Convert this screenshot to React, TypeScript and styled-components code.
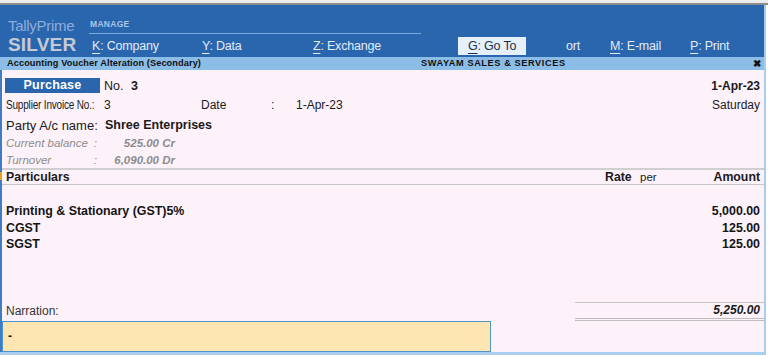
import React from "react";
import styled, { createGlobalStyle } from "styled-components";

const Global = createGlobalStyle`
  html, body { margin: 0; padding: 0; background: #ffffff; }
  body { font-family: "Liberation Sans", Arial, sans-serif; color: #1a1a1a; }
`;

const Screen = styled.div`
  width: 768px;
  height: 359px;
  display: flex;
  flex-direction: column;
  overflow: hidden;
  background: #ffffff;
`;

const TopStrip = styled.div`
  height: 3px;
  background: #ececec;
  border-bottom: 2px solid #8c8c8c;
`;

const Window = styled.div`
  width: 764px;
  border-right: 2px solid #a9cdee;
  display: flex;
  flex-direction: column;
  height: 350px;
`;

const Header = styled.div`
  height: 52px;
  background: #2966ae;
  display: flex;
`;

const Brand = styled.div`
  width: 81px;
  padding-left: 8px;
  display: flex;
  flex-direction: column;
  justify-content: flex-end;
  padding-bottom: 2px;
`;

const BrandTop = styled.div`
  font-size: 15px;
  color: #8eaedb;
  line-height: 17px;
  letter-spacing: -0.3px;
`;

const BrandBottom = styled.div`
  font-size: 19px;
  font-weight: bold;
  color: #c4cad4;
  line-height: 21px;
  letter-spacing: 0.2px;
`;

const MenuArea = styled.div`
  flex: 1;
  display: flex;
  flex-direction: column;
`;

const GroupRow = styled.div`
  height: 29px;
  display: flex;
  align-items: flex-end;
`;

const GroupLabel = styled.div`
  width: 331px;
  height: 15px;
  border-bottom: 1px solid #7fa8dc;
  font-size: 8.5px;
  font-weight: bold;
  color: #a9c4e8;
  padding-left: 1px;
  letter-spacing: 0.3px;
  line-height: 12px;
`;

const MenuRow = styled.div`
  height: 23px;
  display: flex;
  align-items: center;
`;

const MenuItem = styled.div<{ $w: number; $active?: boolean }>`
  width: ${(p) => p.$w}px;
  flex: none;
  font-size: 12.5px;
  height: 18px;
  line-height: 18px;
  box-sizing: border-box;
  color: ${(p) => (p.$active ? "#1f2f4a" : "#e3ebf6")};
  background: ${(p) => (p.$active ? "#e6f0fa" : "transparent")};
  padding-left: ${(p) => (p.$active ? 10 : 3)}px;
  white-space: nowrap;
  letter-spacing: -0.2px;
`;

const Key = styled.span`
  text-decoration: underline;
  text-underline-offset: 3px;
`;

const Spacer = styled.div<{ $w: number }>`
  width: ${(p) => p.$w}px;
  flex: none;
`;

const SubBar = styled.div`
  height: 13px;
  background: #8bbde7;
  display: grid;
  grid-template-columns: 1fr 1fr 20px;
  align-items: center;
  font-size: 9.2px;
  font-weight: bold;
  color: #111;
  line-height: 13px;
`;

const SubLeft = styled.div`
  padding-left: 7px;
  letter-spacing: 0.1px;
  white-space: nowrap;
`;

const SubCenter = styled.div`
  padding-left: 49px;
  letter-spacing: 0.6px;
  white-space: nowrap;
`;

const Close = styled.div`
  text-align: center;
  font-size: 10px;
  padding-left: 6px;
`;

const Body = styled.div`
  flex: 1;
  background: #fdf2fa;
  border-left: 2px solid #3f7cc4;
  display: flex;
  flex-direction: column;
  position: relative;
`;

const Row = styled.div<{ $h: number; $top?: number }>`
  height: ${(p) => p.$h}px;
  margin-top: ${(p) => p.$top ?? 0}px;
  display: flex;
  align-items: center;
  justify-content: space-between;
  padding: 0 4px 0 4px;
  font-size: 12px;
`;

const Cluster = styled.div`
  display: flex;
  align-items: center;
`;

const TypeBox = styled.div`
  width: 95px;
  height: 15px;
  background: #2966ae;
  color: #ffffff;
  font-weight: bold;
  font-size: 12.5px;
  text-align: center;
  line-height: 15px;
  margin-left: -1px;
  letter-spacing: 0.2px;
`;

const NoLabel = styled.span`
  margin-left: 4px;
  font-size: 12.5px;
`;

const Bold = styled.span<{ $ml?: number }>`
  font-weight: bold;
  margin-left: ${(p) => p.$ml ?? 0}px;
`;

const NarrowBox = styled.span<{ $w: number }>`
  display: inline-block;
  width: ${(p) => p.$w}px;
  white-space: nowrap;
`;

const NarrowText = styled.span`
  display: inline-block;
  font-size: 12px;
  transform: scaleX(0.83);
  transform-origin: left center;
  letter-spacing: -0.2px;
`;

const Cell = styled.span<{ $w: number }>`
  display: inline-block;
  width: ${(p) => p.$w}px;
  white-space: nowrap;
`;

const PartyLabel = styled.span`
  font-size: 13px;
  width: 99px;
  display: inline-block;
`;

const PartyName = styled.span`
  font-size: 12.5px;
  font-weight: bold;
`;

const InfoRow = styled.div<{ $h: number }>`
  height: ${(p) => p.$h}px;
  display: flex;
  align-items: center;
  padding-left: 4px;
  font-size: 11.5px;
  font-style: italic;
  color: #8c8c8c;
  white-space: nowrap;
`;

const InfoLabel = styled.span`
  width: 91px;
  display: flex;
  justify-content: space-between;
  padding-right: 2px;
`;

const InfoValue = styled.span`
  width: 76px;
  display: inline-block;
  text-align: right;
  font-weight: bold;
`;

const Separator = styled.div`
  height: 2px;
  background: #cfcfcf;
`;

const ColHeader = styled.div`
  height: 14px;
  display: flex;
  align-items: center;
  padding: 0 4px;
  font-size: 12.3px;
  font-weight: bold;
  border-bottom: 1px solid #c8c8c8;
`;

const Grow = styled.div`
  flex: 1;
`;

const RateCol = styled.span`
  width: 35px;
`;

const PerCol = styled.span`
  width: 40px;
  font-weight: normal;
  font-size: 11.5px;
`;

const AmountCol = styled.span`
  width: 80px;
  text-align: right;
`;

const ItemList = styled.div`
  margin-top: 18px;
  display: flex;
  flex-direction: column;
`;

const Item = styled.div`
  height: 16.5px;
  display: flex;
  align-items: center;
  justify-content: space-between;
  padding: 0 4px;
  font-size: 12.4px;
  font-weight: bold;
  color: #141414;
`;

const FootRow = styled.div`
  margin-top: auto;
  display: flex;
  align-items: flex-end;
  justify-content: space-between;
`;

const NarrLabel = styled.div`
  padding-left: 4px;
  font-size: 12px;
  color: #333;
  line-height: 15px;
  padding-bottom: 2px;
`;

const TotalBox = styled.div`
  width: 185px;
  border-top: 1px solid #c4c4c4;
  border-bottom: 3px double #bdbdbd;
  height: 15px;
  text-align: right;
  font-size: 12px;
  font-weight: bold;
  font-style: italic;
  line-height: 15px;
  padding-right: 4px;
  box-sizing: content-box;
`;

const NarrationInput = styled.div`
  width: 482px;
  height: 29px;
  background: #fee6b3;
  border: 1px solid #4e93c9;
  font-size: 12px;
  font-weight: bold;
  line-height: 28px;
  padding-left: 5px;
  box-sizing: content-box;
`;

const BottomBar = styled.div`
  height: 3px;
  background: #a9cdee;
`;

const Marker = styled.div`
  position: absolute;
  left: -2px;
  top: 102px;
  width: 2px;
  height: 8px;
  background: #e8a020;
`;

export default function App() {
  return (
    <Screen>
      <Global />
      <TopStrip />
      <Window>
        <Header>
          <Brand>
            <BrandTop>TallyPrime</BrandTop>
            <BrandBottom>SILVER</BrandBottom>
          </Brand>
          <MenuArea>
            <GroupRow>
              <GroupLabel>MANAGE</GroupLabel>
            </GroupRow>
            <MenuRow>
              <MenuItem $w={110}>
                <Key>K</Key>: Company
              </MenuItem>
              <MenuItem $w={111}>
                <Key>Y</Key>: Data
              </MenuItem>
              <MenuItem $w={148}>
                <Key>Z</Key>: Exchange
              </MenuItem>
              <MenuItem $w={68} $active>
                <Key>G</Key>: Go To
              </MenuItem>
              <Spacer $w={37} />
              <MenuItem $w={44}>ort</MenuItem>
              <MenuItem $w={80}>
                <Key>M</Key>: E-mail
              </MenuItem>
              <MenuItem $w={70}>
                <Key>P</Key>: Print
              </MenuItem>
            </MenuRow>
          </MenuArea>
        </Header>
        <SubBar>
          <SubLeft>Accounting Voucher Alteration (Secondary)</SubLeft>
          <SubCenter>SWAYAM SALES &amp; SERVICES</SubCenter>
          <Close>✖</Close>
        </SubBar>
        <Body>
          <Marker />
          <Row $h={15} $top={8}>
            <Cluster>
              <TypeBox>Purchase</TypeBox>
              <NoLabel>
                No. <Bold $ml={4}>3</Bold>
              </NoLabel>
            </Cluster>
            <Bold>1-Apr-23</Bold>
          </Row>
          <Row $h={20} $top={2}>
            <Cluster>
              <NarrowBox $w={98}>
                <NarrowText>Supplier Invoice No.:</NarrowText>
              </NarrowBox>
              <Cell $w={97}>3</Cell>
              <Cell $w={70}>Date</Cell>
              <Cell $w={25}>:</Cell>
              <Cell $w={80}>1-Apr-23</Cell>
            </Cluster>
            <span>Saturday</span>
          </Row>
          <Row $h={18} $top={1}>
            <Cluster>
              <PartyLabel>Party A/c name:</PartyLabel>
              <PartyName>Shree Enterprises</PartyName>
            </Cluster>
          </Row>
          <InfoRow $h={17}>
            <InfoLabel>
              <span>Current balance</span>
              <span>:</span>
            </InfoLabel>
            <InfoValue>525.00 Cr</InfoValue>
          </InfoRow>
          <InfoRow $h={17}>
            <InfoLabel>
              <span>Turnover</span>
              <span>:</span>
            </InfoLabel>
            <InfoValue>6,090.00 Dr</InfoValue>
          </InfoRow>
          <Separator />
          <ColHeader>
            <span>Particulars</span>
            <Grow />
            <RateCol>Rate</RateCol>
            <PerCol>per</PerCol>
            <AmountCol>Amount</AmountCol>
          </ColHeader>
          <ItemList>
            <Item>
              <span>Printing &amp; Stationary (GST)5%</span>
              <span>5,000.00</span>
            </Item>
            <Item>
              <span>CGST</span>
              <span>125.00</span>
            </Item>
            <Item>
              <span>SGST</span>
              <span>125.00</span>
            </Item>
          </ItemList>
          <FootRow>
            <NarrLabel>Narration:</NarrLabel>
            <TotalBox>5,250.00</TotalBox>
          </FootRow>
          <NarrationInput>-</NarrationInput>
        </Body>
        <BottomBar />
      </Window>
    </Screen>
  );
}
